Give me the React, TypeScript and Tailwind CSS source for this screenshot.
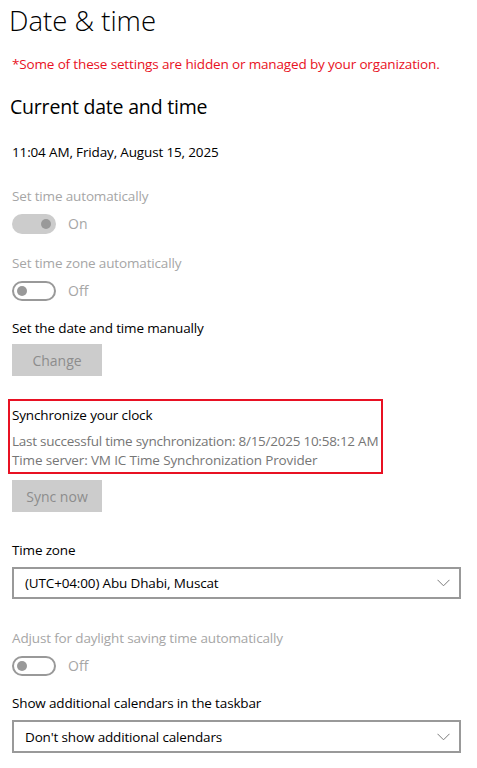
const font = { fontFamily: '"Segoe UI", "Open Sans", "Noto Sans", sans-serif' }

function Toggle({ on }: { on: boolean }) {
  return (
    <div className="mt-[8px] flex h-[20px] items-center gap-[12px]">
      {on ? (
        <div className="flex h-[20px] w-[44px] items-center justify-end rounded-full bg-[#cccccc] pr-[5px]">
          <div className="h-[10px] w-[10px] rounded-full bg-[#999999]" />
        </div>
      ) : (
        <div className="flex h-[20px] w-[44px] items-center rounded-full border-2 border-[#999999] pl-[3px]">
          <div className="h-[10px] w-[10px] rounded-full bg-[#999999]" />
        </div>
      )}
      <span className="text-[14px] leading-[20px] text-[#a6a6a6]">{on ? "On" : "Off"}</span>
    </div>
  )
}

function Select({ value, className }: { value: string; className: string }) {
  return (
    <div className={`flex w-[449px] items-center justify-between border-2 border-[#999999] pl-[11px] pr-[9px] ${className}`}>
      <span className="text-[13.5px] leading-[20px] tracking-[-0.15px] text-black">{value}</span>
      <svg width="13" height="8" viewBox="0 0 13 8" fill="none">
        <path d="M0.5 0.8 L6.5 6.8 L12.5 0.8" stroke="#7a7a7a" strokeWidth="1" />
      </svg>
    </div>
  )
}

function GrayButton({ label, className }: { label: string; className: string }) {
  return (
    <div className={`flex h-[32px] w-[90px] items-center justify-center bg-[#cccccc] text-[14px] text-[#8c8c8c] ${className}`}>
      {label}
    </div>
  )
}

const body = "text-[13.5px] leading-[20px] tracking-[-0.15px]"

export default function App() {
  return (
    <div className="h-[768px] w-[477px] overflow-hidden bg-white pl-[12px]" style={font}>
      <h1 className="ml-[-3px] pt-[3px] text-[27.5px] font-light leading-[36px] text-black">Date &amp; time</h1>
      <p className={`mt-[15px] ${body} text-[#e81123]`}>
        *Some of these settings are hidden or managed by your organization.
      </p>
      <h2 className="ml-[-2px] mt-[19px] text-[19.5px] leading-[28px] tracking-[-0.2px] text-black">Current date and time</h2>
      <p className={`mt-[21px] ${body} text-black`}>11:04 AM, Friday, August 15, 2025</p>

      <p className={`mt-[24px] ${body} text-[#a6a6a6]`}>Set time automatically</p>
      <Toggle on />

      <p className={`mt-[19px] ${body} text-[#a6a6a6]`}>Set time zone automatically</p>
      <Toggle on={false} />

      <p className={`mt-[17px] ${body} text-black`}>Set the date and time manually</p>
      <GrayButton label="Change" className="mt-[6px]" />

      <div className="ml-[-4px] mt-[23px] w-[375px] border-2 border-[#e81123] pb-[2px] pl-[2px] pt-[4px]">
        <p className={`${body} text-black`}>Synchronize your clock</p>
        <p className="mt-[7px] whitespace-nowrap text-[13.5px] leading-[19px] tracking-[-0.25px] text-[#767676]">
          Last successful time synchronization: 8/15/2025 10:58:12 AM
        </p>
        <p className="whitespace-nowrap text-[13.5px] leading-[19px] tracking-[-0.15px] text-[#767676]">
          Time server: VM IC Time Synchronization Provider
        </p>
      </div>
      <GrayButton label="Sync now" className="mt-[6px]" />

      <p className={`mt-[28px] ${body} text-black`}>Time zone</p>
      <Select value="(UTC+04:00) Abu Dhabi, Muscat" className="mt-[7px] h-[32px]" />

      <p className={`mt-[29px] ${body} text-[#a6a6a6]`}>Adjust for daylight saving time automatically</p>
      <Toggle on={false} />

      <p className={`mt-[17px] ${body} text-black`}>Show additional calendars in the taskbar</p>
      <Select value="Don't show additional calendars" className="mt-[7px] h-[33px]" />
    </div>
  )
}
